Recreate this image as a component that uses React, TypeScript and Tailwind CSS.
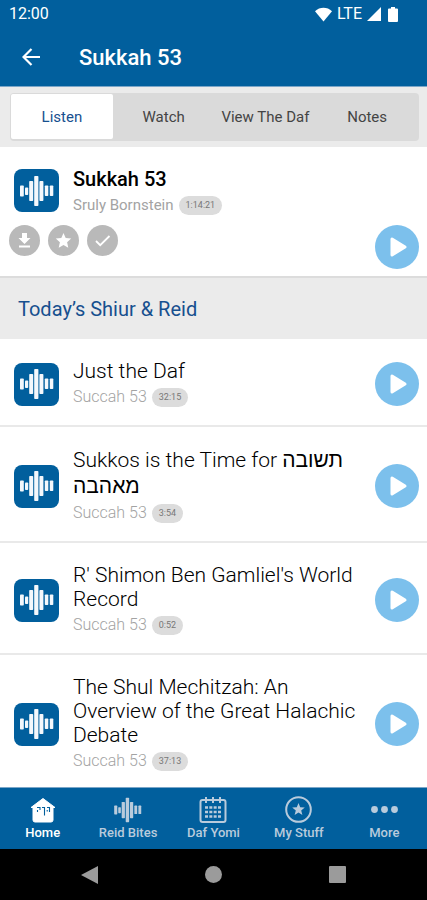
import type { ReactNode } from "react";

type Shiur = { title: string; source: string; length: string; leading?: string };

const tabs = ["Listen", "Watch", "View The Daf", "Notes"];

const shiurim: Shiur[] = [
  { title: "Just the Daf", source: "Succah 53", length: "32:15" },
  { title: "Sukkos is the Time for תשובה מאהבה", source: "Succah 53", length: "3:54", leading: "leading-[26px]" },
  { title: "R' Shimon Ben Gamliel's World Record", source: "Succah 53", length: "0:52" },
  { title: "The Shul Mechitzah: An Overview of the Great Halachic Debate", source: "Succah 53", length: "37:13" },
];

function Wave({ className }: { className: string }) {
  return (
    <svg viewBox="0 0 34 32" className={className} fill="currentColor" aria-hidden="true">
      <rect x="0" y="10.5" width="3.8" height="11" rx="0.8" />
      <rect x="5" y="12.5" width="3.2" height="7.5" rx="0.8" />
      <rect x="9.2" y="6" width="4" height="20" rx="0.8" />
      <rect x="14.2" y="1" width="4.2" height="30" rx="0.8" />
      <rect x="19.4" y="6" width="4" height="20" rx="0.8" />
      <rect x="24.8" y="10.5" width="3.5" height="10.5" rx="0.8" />
      <rect x="29.8" y="10.5" width="3.5" height="10.5" rx="0.8" />
    </svg>
  );
}

function Thumb() {
  return (
    <div className="flex h-[43px] w-[45px] shrink-0 items-center justify-center rounded-lg bg-[#015f9d] text-[#f4f8fc]">
      <Wave className="h-8 w-[34px]" />
    </div>
  );
}

function PlayButton({ label, className = "" }: { label: string; className?: string }) {
  return (
    <button
      type="button"
      aria-label={label}
      className={`flex size-11 shrink-0 items-center justify-center rounded-full bg-[#7cc0ec] text-white ${className}`}
    >
      <svg viewBox="0 0 44 44" className="size-11" aria-hidden="true">
        <path d="M17 14v16l13-8z" fill="currentColor" stroke="currentColor" strokeWidth="3" strokeLinejoin="round" />
      </svg>
    </button>
  );
}

function Meta({ source, length, className }: { source: string; length: string; className: string }) {
  return (
    <div className="mt-0.5 flex h-6 items-center gap-[5px]">
      <span className={`text-[#a3a3a3] ${className}`}>{source}</span>
      <span className="flex h-[19px] items-center rounded-full bg-[#dcdcdc] px-[7px] text-[9px] leading-none text-[#777]">
        {length}
      </span>
    </div>
  );
}

function RoundAction({ label, children }: { label: string; children: ReactNode }) {
  return (
    <button type="button" aria-label={label} className="size-[31px] rounded-full bg-[#b9b9b9] text-white">
      <svg viewBox="0 0 31 31" className="size-[31px]" aria-hidden="true">
        {children}
      </svg>
    </button>
  );
}

function NavItem({ label, active = false, children }: { label: string; active?: boolean; children: ReactNode }) {
  return (
    <a
      href="#"
      aria-current={active ? "page" : undefined}
      className={`flex flex-col items-center pt-2 ${active ? "text-white" : "text-[#b9cbdc]"}`}
    >
      <span className="flex h-[27px] items-center justify-center">{children}</span>
      <span className="text-[13px] leading-5 font-medium whitespace-nowrap">{label}</span>
    </a>
  );
}

export default function App() {
  return (
    <div className="flex h-dvh flex-col overflow-hidden bg-white font-['Roboto','Liberation_Sans',sans-serif] text-black">
      <header className="shrink-0 border-b border-[#7ba6c8] bg-[#015f9d] text-white">
        <div className="flex h-7 items-center justify-between pr-[29px] pl-[9px] text-base">
          <span>12:00</span>
          <div className="flex items-center gap-[5px]">
            <svg viewBox="0 0 17 15" className="h-[15px] w-[17px]" fill="currentColor" aria-hidden="true">
              <path d="M8.5 14.5 0 4.2C4.8-.3 12.2-.3 17 4.2z" />
            </svg>
            <span>LTE</span>
            <svg viewBox="0 0 14 14" className="size-3.5" fill="currentColor" aria-hidden="true">
              <path d="M14 0v14H0z" />
            </svg>
            <svg viewBox="0 0 10 15" className="ml-0.5 h-[15px] w-2.5" fill="currentColor" aria-hidden="true">
              <path d="M3 0h4v1.5h2a1 1 0 0 1 1 1V14a1 1 0 0 1-1 1H1a1 1 0 0 1-1-1V2.5a1 1 0 0 1 1-1h2z" />
            </svg>
          </div>
        </div>
        <div className="flex h-[58px] items-center gap-[39px] pl-[22px]">
          <button type="button" aria-label="Back" className="h-[18px] w-[18px]">
            <svg viewBox="0 0 18 18" className="size-[18px]" fill="none" stroke="currentColor" strokeWidth="2.2" aria-hidden="true">
              <path d="M18 9H2M9.5 1 1.5 9l8 8" />
            </svg>
          </button>
          <h1 className="pt-0.5 text-[22px] leading-7 font-medium">Sukkah 53</h1>
        </div>
      </header>

      <main className="min-h-0 flex-1 overflow-y-auto [scrollbar-width:none]">
        <div className="bg-[#ebebeb] py-1.5 pr-2 pl-2.5">
          <div role="tablist" className="grid h-12 grid-cols-4 rounded-sm bg-[#dadada] p-px pb-0.5">
            {tabs.map((tab, i) => (
              <button
                key={tab}
                type="button"
                role="tab"
                aria-selected={i === 0}
                className={`pt-0.5 text-[15px] whitespace-nowrap ${
                  i === 0 ? "rounded-xs bg-white text-[#17508f]" : "text-[#444]"
                }`}
              >
                {tab}
              </button>
            ))}
          </div>
        </div>

        <section className="flex items-end justify-between border-b-2 border-[#dcdcdc] pr-2">
          <div className="pt-5 pb-5">
            <div className="flex items-start gap-3.5 pl-3.5">
              <div className="pt-0.5">
                <Thumb />
              </div>
              <div>
                <h2 className="text-xl leading-6 font-medium">Sukkah 53</h2>
                <Meta source="Sruly Bornstein" length="1:14:21" className="text-[15px]" />
              </div>
            </div>
            <div className="flex gap-2 pt-2 pl-[9px]">
              <RoundAction label="Download">
                <path d="M13 8h5v5h3.5l-6 6-6-6H13z" fill="currentColor" />
                <path d="M10 21.5h11" stroke="currentColor" strokeWidth="2" />
              </RoundAction>
              <RoundAction label="Favorite">
                <path
                  d="m15.5 8 2.2 5 5.5.6-4.100 3.700 1.200 5.400-4.800-2.800-4.800 2.800 1.200-5.400-4.100-3.700 5.500-.6z"
                  fill="currentColor"
                />
              </RoundAction>
              <RoundAction label="Mark as completed">
                <path d="m9 16 4.2 4.2L22.5 11" fill="none" stroke="currentColor" strokeWidth="1.8" />
              </RoundAction>
            </div>
          </div>
          <PlayButton label="Play Sukkah 53" className="mb-[7px]" />
        </section>

        <h2 className="bg-[#ebebeb] px-[18px] pt-[17px] pb-4 text-xl leading-7 text-[#17508f]">Today’s Shiur &amp; Reid</h2>

        <ul>
          {shiurim.map((s) => (
            <li key={s.title} className="flex items-center border-b-2 border-[#e9e9e9] pt-5 pr-2 pb-4 pl-3.5">
              <Thumb />
              <div className="min-w-0 flex-1 pl-3.5">
                <h3 className={`text-[21px] font-light ${s.leading ?? "leading-6"}`}>{s.title}</h3>
                <Meta source={s.source} length={s.length} className="text-base font-light" />
              </div>
              <PlayButton label={`Play ${s.title}`} />
            </li>
          ))}
        </ul>
      </main>

      <nav className="grid h-[62px] shrink-0 grid-cols-5 border-t border-[#7ba6c8] bg-[#015f9d]">
        <NavItem label="Home" active>
          <svg viewBox="0 0 26 26" className="size-[26px]" aria-hidden="true">
            <path
              d="M13 1.500 1 10.500h2V23a2 2 0 0 0 2 2h16a2 2 0 0 0 2-2V10.500h2z"
              fill="currentColor"
              stroke="currentColor"
              strokeLinejoin="round"
            />
            <path d="M7 10.500h3v2.500M7.500 13v2M12 10.500h2.500v8M17 10.500h2.500v4.500M17.200 13v1.500" fill="none" stroke="#015f9d" strokeWidth="1.100" />
          </svg>
        </NavItem>
        <NavItem label="Reid Bites">
          <Wave className="h-[26px] w-7" />
        </NavItem>
        <NavItem label="Daf Yomi">
          <svg viewBox="0 0 28 27" className="h-[27px] w-7" fill="none" stroke="currentColor" strokeWidth="2" aria-hidden="true">
            <rect x="1.5" y="4" width="25" height="22" rx="2" />
            <path d="M7 1v6M14 1v6M21 1v6" />
            <path d="M6 11.5h16M6 16h16M6 20.5h16" strokeWidth="2.4" strokeDasharray="3 1.333" />
          </svg>
        </NavItem>
        <NavItem label="My Stuff">
          <svg viewBox="0 0 27 27" className="size-[27px]" aria-hidden="true">
            <circle cx="13.5" cy="13.5" r="12.3" fill="none" stroke="currentColor" strokeWidth="2" />
            <path d="m13.5 7 1.700 4.300 4.600.3-3.600 3 1.200 4.500-3.900-2.500-3.900 2.500 1.200-4.500-3.600-3 4.600-.3z" fill="currentColor" />
          </svg>
        </NavItem>
        <NavItem label="More">
          <svg viewBox="0 0 27 7" className="h-[7px] w-[27px]" fill="currentColor" aria-hidden="true">
            <circle cx="3.5" cy="3.5" r="3.4" />
            <circle cx="13.5" cy="3.5" r="3.4" />
            <circle cx="23.5" cy="3.5" r="3.4" />
          </svg>
        </NavItem>
      </nav>

      <div className="grid h-[51px] shrink-0 grid-cols-3 items-center justify-items-center bg-black px-7 text-[#9b9b9b]">
        <button type="button" aria-label="System back">
          <svg viewBox="0 0 17 18" className="h-[18px] w-[17px]" fill="currentColor" aria-hidden="true">
            <path d="M17 0v18L0 9z" />
          </svg>
        </button>
        <button type="button" aria-label="System home" className="size-[17px] rounded-full bg-current" />
        <button type="button" aria-label="Recent apps" className="size-[17px] rounded-[1px] bg-current" />
      </div>
    </div>
  );
}
